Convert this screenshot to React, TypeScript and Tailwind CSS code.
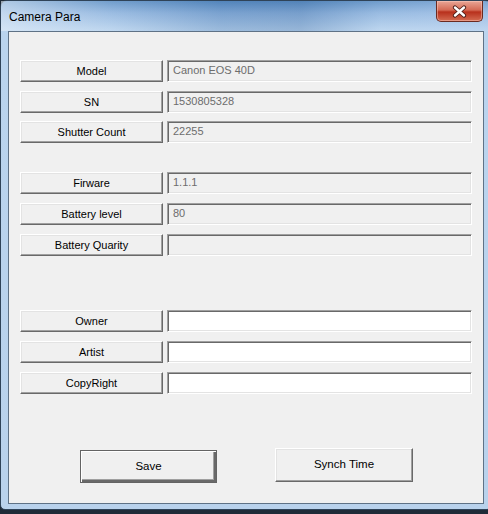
import React from 'react';

const groups = [
  [
    { label: 'Model', value: 'Canon EOS 40D', readOnly: true },
    { label: 'SN', value: '1530805328', readOnly: true },
    { label: 'Shutter Count', value: '22255', readOnly: true },
  ],
  [
    { label: 'Firware', value: '1.1.1', readOnly: true },
    { label: 'Battery level', value: '80', readOnly: true },
    { label: 'Battery Quarity', value: '', readOnly: true },
  ],
  [
    { label: 'Owner', value: '', readOnly: false },
    { label: 'Artist', value: '', readOnly: false },
    { label: 'CopyRight', value: '', readOnly: false },
  ],
];

function FieldRow({ label, value, readOnly }: { label: string; value: string; readOnly: boolean }) {
  return (
    <div className="flex h-[22px] gap-[4px]">
      <div className="w-[143px] h-full flex items-center justify-center bg-[#f0f0f0] border border-t-white border-l-white border-b-[#696969] border-r-[#696969] shadow-[inset_-1px_-1px_0_#a0a0a0,inset_1px_1px_0_#e3e3e3] text-black">
        {label}
      </div>
      <div
        className={`w-[305px] h-full pl-[5px] leading-[19px] border border-t-[#a0a0a0] border-l-[#a0a0a0] border-b-white border-r-white shadow-[inset_1px_1px_0_#696969,inset_-1px_-1px_0_#e3e3e3] ${
          readOnly ? 'bg-[#f0f0f0] text-[#6d6d6d]' : 'bg-white text-black'
        }`}
      >
        {value}
      </div>
    </div>
  );
}

export default function App() {
  return (
    <div className="w-[488px] h-[514px] bg-[#1f2b38] overflow-hidden font-['Liberation_Sans',Arial,sans-serif] text-[11px]">
      <div className="h-[510px] w-[492px] rounded-t-[7px] rounded-b-[5px] border border-[#2f4358] flex flex-col bg-[linear-gradient(to_bottom,#5d8fc4_0px,#8fb4de_12px,#bad4ee_30px,#b9d2ec_100%)]">
        {/* title bar */}
        <div className="h-[30px] flex items-start justify-between bg-[linear-gradient(to_right,rgba(230,240,250,0.6)_0px,rgba(230,240,250,0.15)_110px,rgba(40,90,150,0.2)_220px,rgba(50,95,150,0.25)_300px,rgba(220,235,250,0.15)_380px,rgba(200,220,245,0.3)_440px)]">
          <div className="pl-[8px] pt-[9px] text-[12px] leading-[14px] text-black">Camera Para</div>
          <div className="mr-[8px] w-[47px] h-[21px] rounded-b-[5px] border border-t-0 border-[#6b2a20] bg-[linear-gradient(to_bottom,#e9a696_0%,#d46a55_45%,#b8301c_55%,#d46c52_100%)] flex items-center justify-center shadow-[inset_0_0_0_1px_rgba(255,210,200,0.45)]">
            <svg width="15" height="13" viewBox="0 0 15 13">
              <path d="M3 2.5 L12 10.5 M12 2.5 L3 10.5" stroke="#4a1d18" strokeWidth="4.2" strokeLinecap="round" />
              <path d="M3 2.5 L12 10.5 M12 2.5 L3 10.5" stroke="#ffffff" strokeWidth="2.4" strokeLinecap="round" />
            </svg>
          </div>
        </div>

        {/* client area */}
        <div className="ml-[7px] w-[476px] h-[473px] border border-[#5f7286] bg-[#f0f0f0] pl-[11px] pt-[28px] flex flex-col">
          <div className="flex flex-col">
            <FieldRow {...groups[0][0]} />
            <div className="mt-[9px]">
              <FieldRow {...groups[0][1]} />
            </div>
            <div className="mt-[8px]">
              <FieldRow {...groups[0][2]} />
            </div>
          </div>
          <div className="mt-[29px] flex flex-col gap-[9px]">
            {groups[1].map((f) => (
              <FieldRow key={f.label} {...f} />
            ))}
          </div>
          <div className="mt-[54px] flex flex-col gap-[9px]">
            {groups[2].map((f) => (
              <FieldRow key={f.label} {...f} />
            ))}
          </div>

          <div className="mt-[54px] pl-[60px] flex items-start gap-[58px]">
            <button className="mt-[2px] w-[137px] h-[33px] bg-[#f0f0f0] border border-[#646464] shadow-[inset_1px_1px_0_#ffffff,inset_-2px_-2px_0_#696969,inset_-3px_-3px_0_#a0a0a0] text-black text-[11.5px]">
              Save
            </button>
            <button className="w-[138px] h-[34px] bg-[#f0f0f0] border border-t-white border-l-white border-b-[#696969] border-r-[#696969] shadow-[inset_-1px_-1px_0_#a0a0a0,inset_1px_1px_0_#e3e3e3] text-black text-[11.5px]">
              Synch Time
            </button>
          </div>
        </div>
      </div>
    </div>
  );
}
